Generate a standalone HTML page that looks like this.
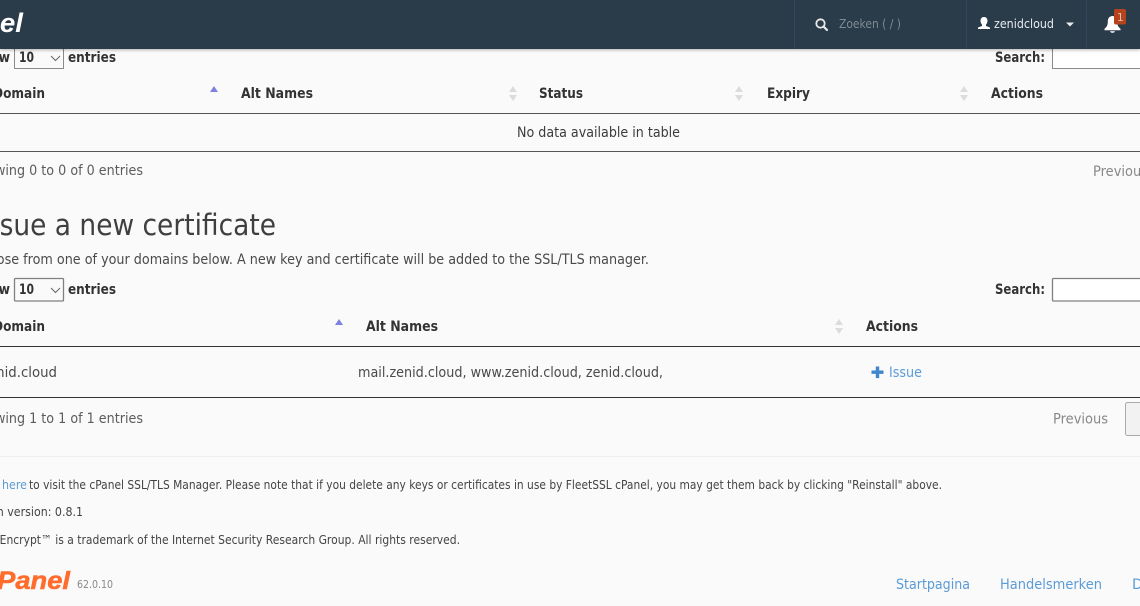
<!DOCTYPE html>
<html><head><meta charset="utf-8"><style>
html,body{margin:0;padding:0;width:1140px;height:606px;overflow:hidden;background:#fafafa}
svg{display:block;position:absolute;left:0;top:0}
text{font-family:"DejaVu Sans","Liberation Sans",sans-serif;font-size:14px;fill:#555}
.b{font-weight:bold;fill:#333;font-size:14px}
.s{font-size:12.5px;fill:#444}
.l{fill:#5b9bd5}
.g{fill:#888}
.logo{font-family:"Liberation Sans",sans-serif;font-weight:bold;font-style:italic}
</style></head><body>
<svg width="1140" height="606" viewBox="0 0 1140 606" xmlns="http://www.w3.org/2000/svg">
<defs><filter id="sh" x="-5%" y="-20%" width="110%" height="150%"><feDropShadow dx="0" dy="1" stdDeviation="1.5" flood-color="#000" flood-opacity=".3"/></filter></defs>
<rect width="1140" height="606" fill="#fafafa"/>

<!-- first table controls -->
<text class="b" x="-28" y="62" textLength="38" lengthAdjust="spacingAndGlyphs">Show</text>
<rect x="14.500" y="40" width="49" height="28.500" fill="#fafafa" stroke="#8a8a8a"/>
<text class="b" x="19" y="62" textLength="15" lengthAdjust="spacingAndGlyphs">10</text>
<path d="M51 56l4.500 4.500 4.500-4.500" fill="none" stroke="#666"/>
<text class="b" x="68" y="62" textLength="48" lengthAdjust="spacingAndGlyphs">entries</text>
<text class="b" x="995" y="62" textLength="50" lengthAdjust="spacingAndGlyphs">Search:</text>
<rect x="1052.500" y="40" width="100" height="28.500" fill="#fff" stroke="#8a8a8a"/>

<text class="b" x="-7" y="98" textLength="52" lengthAdjust="spacingAndGlyphs">Domain</text>
<path d="M210 92l4-6 4 6z" fill="#8080e0"/>
<text class="b" x="241" y="98" textLength="72" lengthAdjust="spacingAndGlyphs">Alt Names</text>
<path d="M509 92l4-6 4 6zM509 95l4 6 4-6z" fill="#dcdcdc"/>
<text class="b" x="539" y="98" textLength="44" lengthAdjust="spacingAndGlyphs">Status</text>
<path d="M735 92l4-6 4 6zM735 95l4 6 4-6z" fill="#dcdcdc"/>
<text class="b" x="767" y="98" textLength="43" lengthAdjust="spacingAndGlyphs">Expiry</text>
<path d="M960 92l4-6 4 6zM960 95l4 6 4-6z" fill="#dcdcdc"/>
<text class="b" x="991" y="98" textLength="52" lengthAdjust="spacingAndGlyphs">Actions</text>
<rect y="113" width="1140" height="1" fill="#555"/>
<text x="517" y="137" textLength="163" lengthAdjust="spacingAndGlyphs" style="fill:#3c3c3c">No data available in table</text>
<rect y="151" width="1140" height="1" fill="#555"/>
<text x="-29" y="175" textLength="172" lengthAdjust="spacingAndGlyphs" style="fill:#5c5c5c">Showing 0 to 0 of 0 entries</text>
<text class="g" x="1093" y="176" textLength="55" lengthAdjust="spacingAndGlyphs">Previous</text>

<!-- heading -->
<text x="-22" y="235" textLength="298" lengthAdjust="spacingAndGlyphs" style="font-size:29px;fill:#3f3f3f">Issue a new certificate</text>
<text x="-28" y="264" textLength="677" lengthAdjust="spacingAndGlyphs" style="fill:#4a4a4a">Choose from one of your domains below. A new key and certificate will be added to the SSL/TLS manager.</text>

<!-- second table -->
<text class="b" x="-28" y="294" textLength="38" lengthAdjust="spacingAndGlyphs">Show</text>
<rect x="14.500" y="278.500" width="49" height="22.500" rx="1" fill="#fafafa" stroke="#808080" stroke-width="1.300"/>
<text class="b" x="19" y="294" textLength="15" lengthAdjust="spacingAndGlyphs">10</text>
<path d="M51 288l4.500 4.500 4.500-4.500" fill="none" stroke="#666"/>
<text class="b" x="68" y="294" textLength="48" lengthAdjust="spacingAndGlyphs">entries</text>
<text class="b" x="995" y="294" textLength="50" lengthAdjust="spacingAndGlyphs">Search:</text>
<rect x="1052.500" y="278.500" width="100" height="22.500" rx="1" fill="#fff" stroke="#808080" stroke-width="1.300"/>

<text class="b" x="-7" y="331" textLength="52" lengthAdjust="spacingAndGlyphs">Domain</text>
<path d="M335 325l4-6 4 6z" fill="#8080e0"/>
<text class="b" x="366" y="331" textLength="72" lengthAdjust="spacingAndGlyphs">Alt Names</text>
<path d="M835 325l4-6 4 6zM835 328l4 6 4-6z" fill="#dcdcdc"/>
<text class="b" x="866" y="331" textLength="52" lengthAdjust="spacingAndGlyphs">Actions</text>
<rect y="346" width="1140" height="1" fill="#333"/>
<text x="-19" y="377" textLength="76" lengthAdjust="spacingAndGlyphs" style="fill:#4a4a4a">zenid.cloud</text>
<text x="358" y="377" textLength="305" lengthAdjust="spacingAndGlyphs" style="fill:#4a4a4a">mail.zenid.cloud, www.zenid.cloud, zenid.cloud,</text>
<path d="M875.800 366.500h3.400v4h4.300v3.400h-4.300v4.200h-3.400v-4.200h-4.300v-3.400h4.300z" fill="#3f86cc"/>
<text class="l" x="889" y="377" textLength="33" lengthAdjust="spacingAndGlyphs">Issue</text>
<rect y="397" width="1140" height="1" fill="#333"/>
<text x="-29" y="423" textLength="172" lengthAdjust="spacingAndGlyphs" style="fill:#5c5c5c">Showing 1 to 1 of 1 entries</text>
<text class="g" x="1053" y="423.500" textLength="55" lengthAdjust="spacingAndGlyphs">Previous</text>
<rect x="1125.500" y="402.500" width="30" height="33" rx="2" fill="#f2f2f2" stroke="#aaa"/>

<rect y="456" width="1140" height="1" fill="#eeeeee"/>
<text class="s" x="-31" y="489" textLength="30" lengthAdjust="spacingAndGlyphs">Click</text>
<text class="s l" x="2" y="489" textLength="25" lengthAdjust="spacingAndGlyphs" style="fill:#5b9bd5">here</text>
<text class="s" x="29" y="489" textLength="913" lengthAdjust="spacingAndGlyphs">to visit the cPanel SSL/TLS Manager. Please note that if you delete any keys or certificates in use by FleetSSL cPanel, you may get them back by clicking "Reinstall" above.</text>
<text class="s" x="-30" y="516" textLength="113" lengthAdjust="spacingAndGlyphs">Plugin version: 0.8.1</text>
<text class="s" x="-29" y="544" textLength="489" lengthAdjust="spacingAndGlyphs">Let's Encrypt™ is a trademark of the Internet Security Research Group. All rights reserved.</text>

<!-- footer -->
<text class="logo" x="-18" y="589" textLength="88" lengthAdjust="spacingAndGlyphs" style="font-size:25px;fill:#ff6c2c;stroke:#ff6c2c;stroke-width:.5">cPanel</text>
<text x="77" y="588" textLength="36" lengthAdjust="spacingAndGlyphs" style="font-size:11px;fill:#888">62.0.10</text>
<text class="l" x="896" y="589" textLength="74" lengthAdjust="spacingAndGlyphs">Startpagina</text>
<text class="l" x="1000" y="589" textLength="102" lengthAdjust="spacingAndGlyphs">Handelsmerken</text>
<text class="l" x="1132" y="589">D</text>

<!-- header -->
<rect width="1140" height="49" fill="#2b3a4a" filter="url(#sh)"/>
<rect x="794" width="1" height="49" fill="#33465a"/>
<rect x="966" width="1" height="49" fill="#33465a"/>
<rect x="1086" width="1" height="49" fill="#33465a"/>
<text class="logo" x="-17" y="32" textLength="40" lengthAdjust="spacingAndGlyphs" style="font-size:27px;fill:#fff">nel</text>
<circle cx="820.500" cy="23.500" r="4.200" fill="none" stroke="#e8e8e8" stroke-width="1.800"/>
<path d="M823.500 26.500l3.500 3.500" stroke="#e8e8e8" stroke-width="2.200" stroke-linecap="round"/>
<text x="839" y="28" textLength="62" lengthAdjust="spacingAndGlyphs" style="font-size:12.500px;fill:#7f8a94">Zoeken ( / )</text>
<path d="M984 17c2.300 0 3.500 1.700 3.500 3.800 0 1.700-.8 3-1.500 3.700v1.500l4 1.500v1.500h-12v-1.500l4-1.500v-1.500c-.7-.7-1.500-2-1.500-3.700 0-2.100 1.200-3.800 3.500-3.800z" fill="#fff"/>
<text x="994" y="28" textLength="60" lengthAdjust="spacingAndGlyphs" style="font-size:12.500px;fill:#e8ebee">zenidcloud</text>
<path d="M1066 22.500h8l-4 4z" fill="#e8ebee"/>
<path d="M1112.500 16c3.200 0 4.700 2.500 4.700 5.500 0 3.400.8 5.200 3.300 7.300v1.400h-16v-1.400c2.500-2.100 3.300-3.900 3.300-7.300 0-3 1.500-5.500 4.700-5.500zM1110 31.200h5c-.3 1-1.300 1.600-2.500 1.600s-2.200-.6-2.500-1.600z" fill="#fff"/>
<rect x="1114" y="9" width="12" height="15.500" rx="2" fill="#b5431c"/>
<text x="1117" y="21" style="font-size:10.500px;fill:#e6c0ae">1</text>
</svg>
</body></html>
